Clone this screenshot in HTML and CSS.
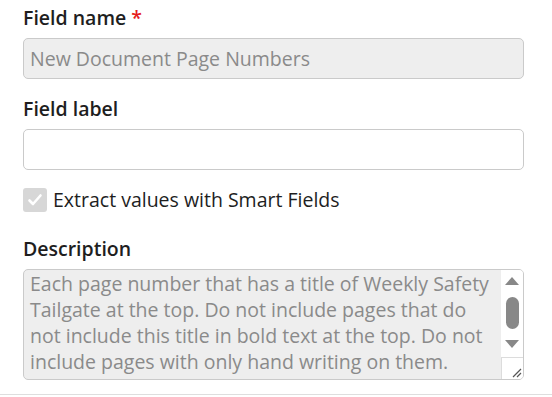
FILE: index.html
```html
<!DOCTYPE html>
<html lang="en">
<head>
  <meta charset="UTF-8">
  <meta name="viewport" content="width=device-width, initial-scale=1.0">
  <title>Field settings</title>
  <link rel="stylesheet" href="styles.css">
</head>
<body>

  <div class="panel">
    <!-- Field name -->
    <label class="field-title" for="fieldName">Field name <span class="required">*</span></label>
    <input class="text-input" type="text" id="fieldName" value="New Document Page Numbers" disabled>

    <!-- Field label -->
    <label class="field-title field-gap" for="fieldLabel">Field label</label>
    <input class="text-input" type="text" id="fieldLabel">

    <!-- Smart fields -->
    <div class="check-row">
      <span class="check-box">
        <svg width="16" height="16" viewBox="0 0 16 16">
          <path d="M2.5 8.5 L6 12 L13.5 3.5" fill="none" stroke="#fff" stroke-width="2.6" stroke-linecap="round" stroke-linejoin="round"/>
        </svg>
      </span>
      <span class="check-text">Extract values with Smart Fields</span>
    </div>

    <!-- Description -->
    <label class="field-title desc-gap">Description</label>
    <div class="text-area">
      <div class="area-text">Each page number that has a title of Weekly Safety Tailgate at the top. Do not include pages that do not include this title in bold text at the top. Do not include pages with only hand writing on them.</div>
      <div class="scroll-col">
        <div class="scroll-track">
          <svg class="arrow" width="14" height="8" viewBox="0 0 14 8"><path d="M7 0 L14 8 L0 8 Z" fill="#888"/></svg>
          <div class="thumb"></div>
          <svg class="arrow" width="14" height="8" viewBox="0 0 14 8"><path d="M0 0 L14 0 L7 8 Z" fill="#888"/></svg>
        </div>
        <div class="resizer">
          <svg width="10" height="10" viewBox="0 0 10 10">
            <path d="M1 9 L9 1 M5 9 L9 5" stroke="#555" stroke-width="1.2"/>
          </svg>
        </div>
      </div>
    </div>
  </div>

  <div class="bottom-rule"></div>

</body>
</html>
```

FILE: styles.css
```css
* {
  margin: 0;
  padding: 0;
  box-sizing: border-box;
}

html, body {
  background: #fff;
  font-family: "Open Sans", Arial, sans-serif;
  color: #1e1e1e;
}

.panel {
  display: flex;
  flex-direction: column;
  padding: 5px 28px 0 23px;
}

.field-title {
  font-size: 19.5px;
  font-weight: 600;
  line-height: 26px;
  margin-bottom: 7px;
}

.required {
  color: #e51c1c;
}

.field-gap {
  margin-top: 17px;
}

.desc-gap {
  margin-top: 24px;
}

.text-input {
  height: 41px;
  width: 100%;
  border: 1px solid #cacaca;
  border-radius: 5px;
  background: #fff;
  padding: 0 6px;
  font-family: inherit;
  font-size: 19.5px;
  color: #888;
}

.text-input:disabled {
  background: #eeeeee;
  color: #8a8a8a;
}

.check-row {
  display: flex;
  align-items: center;
  gap: 6px;
  margin-top: 18px;
  height: 24px;
}

.check-box {
  width: 24px;
  height: 24px;
  border-radius: 3px;
  background: #d7d7d7;
  display: flex;
  align-items: center;
  justify-content: center;
}

.check-text {
  font-size: 19.5px;
  line-height: 24px;
}

.text-area {
  display: flex;
  height: 111px;
  border: 1px solid #cacaca;
  border-radius: 5px;
  overflow: hidden;
  background: #eeeeee;
}

.area-text {
  flex: 1;
  padding: 1px 6px;
  font-size: 19.5px;
  line-height: 26px;
  color: #8a8a8a;
  overflow: hidden;
}

.scroll-col {
  width: 22px;
  display: flex;
  flex-direction: column;
  background: #fff;
}

.scroll-track {
  flex: 1;
  display: flex;
  flex-direction: column;
  align-items: center;
  padding-top: 7px;
}

.thumb {
  width: 13px;
  height: 32px;
  border-radius: 7px;
  background: #888;
  margin: 12px 0 11px;
}

.resizer {
  height: 22px;
  border-top: 1px solid #dcdcdc;
  border-left: 1px solid #dcdcdc;
  display: flex;
  align-items: flex-end;
  justify-content: flex-end;
  padding: 0 1px 1px 0;
}

.bottom-rule {
  margin-top: 14px;
  border-top: 1px solid #dedede;
}
```
